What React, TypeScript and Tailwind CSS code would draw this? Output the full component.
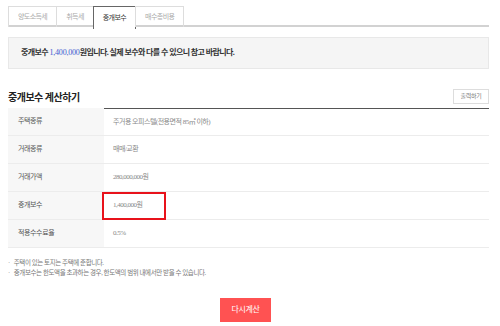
import React from "react";

const tabs = ["양도소득세", "취득세", "중개보수", "매수총비용"];

const rows = [
  { label: "주택종류", value: "주거용 오피스텔(전용면적 85㎡ 이하)" },
  { label: "거래종류", value: "매매/교환" },
  { label: "거래가액", value: "280,000,000원" },
  { label: "중개보수", value: "1,400,000원", mark: true },
  { label: "적용수수료율", value: "0.5%" },
];

const font = { fontFamily: '"Liberation Serif", "Noto Sans CJK KR", serif' };

export default function App() {
  return (
    <div className="w-[500px] h-[326px] bg-white pl-2 pr-[11px] pt-[6px] overflow-hidden" style={font}>
      {/* tabs */}
      <div className="flex border-b-2 border-[#d2d2d2] h-[21px]">
        {tabs.map((t) => {
          const active = t === "중개보수";
          return (
            <div
              key={t}
              className={
                active
                  ? "h-[23px] -mb-[2px] -ml-px px-[9px] flex items-center border border-b-0 border-[#666] bg-white text-[7px] text-[#333] tracking-[-0.6px]"
                  : "h-[21px] -ml-px first:ml-0 px-[9px] flex items-center border border-b-0 border-[#ddd] text-[7px] text-[#aaa] tracking-[-0.6px]"
              }
            >
              {t}
            </div>
          );
        })}
      </div>

      {/* notice */}
      <div className="mt-[10px] h-[32px] bg-[#f5f5f5] border border-[#e8e8e8] flex items-center pl-3 text-[8px] font-bold text-[#333] tracking-[-0.6px]">
        중개보수&nbsp;<span className="text-[#3b5bd0] font-normal tracking-[-0.2px]">1,400,000</span>원입니다. 실제 보수와 다를 수 있으니 참고 바랍니다.
      </div>

      {/* title */}
      <div className="mt-[19px] flex items-end justify-between h-[16px]">
        <h2 className="text-[10px] font-bold text-[#222] tracking-[-0.5px] leading-none mb-[1px]">중개보수 계산하기</h2>
        <button className="h-[15px] w-[36px] border border-[#ddd] bg-white text-[6px] text-[#777] flex items-center justify-center tracking-[-0.3px]">
          출력하기
        </button>
      </div>

      {/* table */}
      <div className="mt-[4px] relative">
        {rows.map((r, i) => (
          <div key={r.label} className="flex h-[28px] border-b border-[#ececec]">
            <div className="w-[96px] bg-[#f7f7f7] flex items-center pl-[10px] text-[7px] text-[#555] tracking-[-0.4px]">
              {r.label}
            </div>
            <div
              className={
                i === 0
                  ? "flex-1 flex items-center pl-[9px] border-t border-[#555] text-[7px] text-[#888] tracking-[-0.5px]"
                  : "flex-1 flex items-center pl-[9px] text-[7px] text-[#888] tracking-[-0.5px]"
              }
            >
              {r.value}
            </div>
          </div>
        ))}
        <div className="absolute left-[94px] top-[84px] w-[64px] h-[28px] border-2 border-[#e8121b]" />
      </div>

      {/* notes */}
      <ul className="mt-[10px] text-[6.5px] text-[#777] tracking-[-0.4px] leading-[10px]">
        <li className="flex gap-[4px]"><span>·</span>주택이 있는 토지는 주택에 준합니다.</li>
        <li className="flex gap-[4px]"><span>·</span>중개보수는 한도액을 초과하는 경우, 한도액의 범위 내에서만 받을 수 있습니다.</li>
      </ul>

      <div className="flex justify-center mt-[20px] pr-[6px]">
        <button className="w-[51px] h-[24px] bg-[#ff5252] text-white text-[8px] tracking-[-0.4px]">다시계산</button>
      </div>
    </div>
  );
}
